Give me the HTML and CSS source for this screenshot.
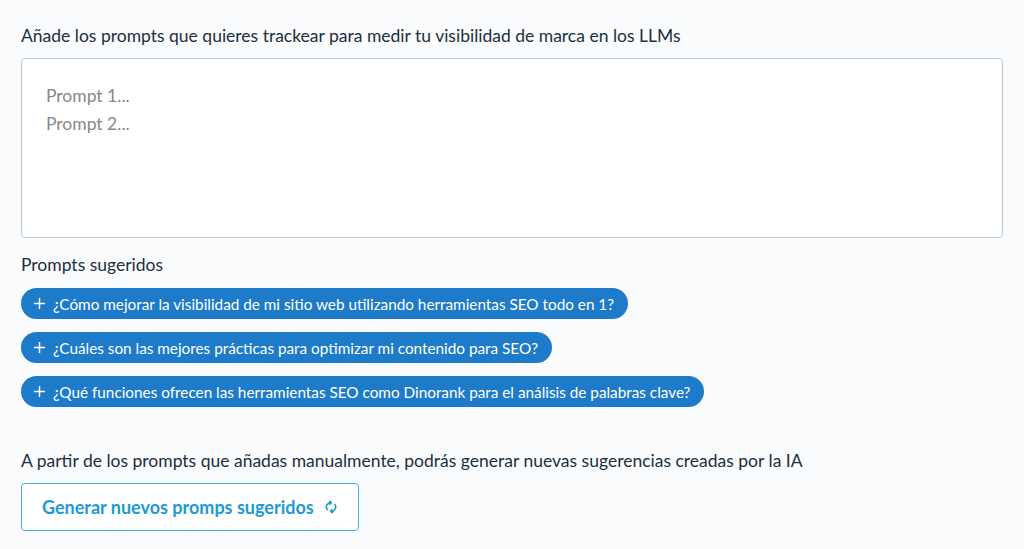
FILE: index.html
```html
<!DOCTYPE html>
<html lang="es">
<head>
  <meta charset="UTF-8">
  <meta name="viewport" content="width=device-width, initial-scale=1.0">
  <title>Prompts</title>
  <link rel="stylesheet" href="styles.css">
</head>
<body>
  <div class="panel">
    <label class="label" for="prompts">Añade los prompts que quieres trackear para medir tu visibilidad de marca en los LLMs</label>
    <textarea id="prompts" class="prompts" placeholder="Prompt 1...&#10;Prompt 2..."></textarea>

    <div class="label suggested-title">Prompts sugeridos</div>
    <div class="suggestions">
      <button class="pill"><svg class="plus" width="11" height="11" viewBox="0 0 11 11" stroke="currentColor" stroke-width="1.5"><path d="M5.5 0v11M0 5.5h11"/></svg>¿Cómo mejorar la visibilidad de mi sitio web utilizando herramientas SEO todo en 1?</button>
      <button class="pill"><svg class="plus" width="11" height="11" viewBox="0 0 11 11" stroke="currentColor" stroke-width="1.5"><path d="M5.5 0v11M0 5.5h11"/></svg>¿Cuáles son las mejores prácticas para optimizar mi contenido para SEO?</button>
      <button class="pill"><svg class="plus" width="11" height="11" viewBox="0 0 11 11" stroke="currentColor" stroke-width="1.5"><path d="M5.5 0v11M0 5.5h11"/></svg>¿Qué funciones ofrecen las herramientas SEO como Dinorank para el análisis de palabras clave?</button>
    </div>

    <p class="label note">A partir de los prompts que añadas manualmente, podrás generar nuevas sugerencias creadas por la IA</p>
    <button class="generate">
      Generar nuevos promps sugeridos
      <svg class="refresh" width="14" height="14" viewBox="0 0 14 14" fill="none" stroke="currentColor" stroke-width="1.6" stroke-linecap="round">
        <path d="M3.2 9.6A4.4 4.4 0 0 1 7 2.6"/>
        <path d="M10.8 4.4A4.4 4.4 0 0 1 7 11.4"/>
        <path d="M5.6 1.4 7.2 2.6 6 4.2"/>
        <path d="M8.4 12.6 6.8 11.4 8 9.8"/>
      </svg>
    </button>
  </div>
</body>
</html>
```

FILE: styles.css
```css
* { box-sizing: border-box; }
body {
  margin: 0;
  background: #fafbfc;
  font-family: Lato, "Open Sans", sans-serif;
  color: #1c2f40;
}
.panel {
  padding: 24px 21px;
  display: flex;
  flex-direction: column;
  align-items: flex-start;
}
.label {
  display: block;
  margin: 0;
  font-size: 17.5px;
  line-height: 24px;
}
.prompts {
  width: 982px;
  height: 180px;
  margin-top: 10px;
  padding: 23px 24px;
  border: 1px solid #b9c9d5;
  border-radius: 4px;
  background: #fff;
  font-family: inherit;
  font-size: 17.5px;
  line-height: 28px;
  color: #333;
  resize: none;
  outline: none;
}
.prompts::placeholder { color: #85888c; }
.suggested-title { margin-top: 15px; }
.suggestions {
  display: flex;
  flex-direction: column;
  align-items: flex-start;
  gap: 13px;
  margin-top: 11px;
}
.pill {
  display: flex;
  align-items: center;
  height: 31px;
  padding: 0 14px 0 13px;
  border: none;
  border-radius: 16px;
  background: #1e7bca;
  color: #fff;
  font-family: inherit;
  font-size: 15.3px;
  cursor: pointer;
}
.plus {
  flex: none;
  margin-right: 8px;
}
.note { margin-top: 42px; }
.generate {
  display: flex;
  align-items: center;
  gap: 10px;
  height: 48px;
  margin-top: 10px;
  padding: 0 20px;
  border: 1px solid #45b1e5;
  border-radius: 4px;
  background: #fff;
  color: #1d9ad6;
  font-family: inherit;
  font-size: 18px;
  font-weight: 700;
  cursor: pointer;
}
.refresh { flex: none; }
```
